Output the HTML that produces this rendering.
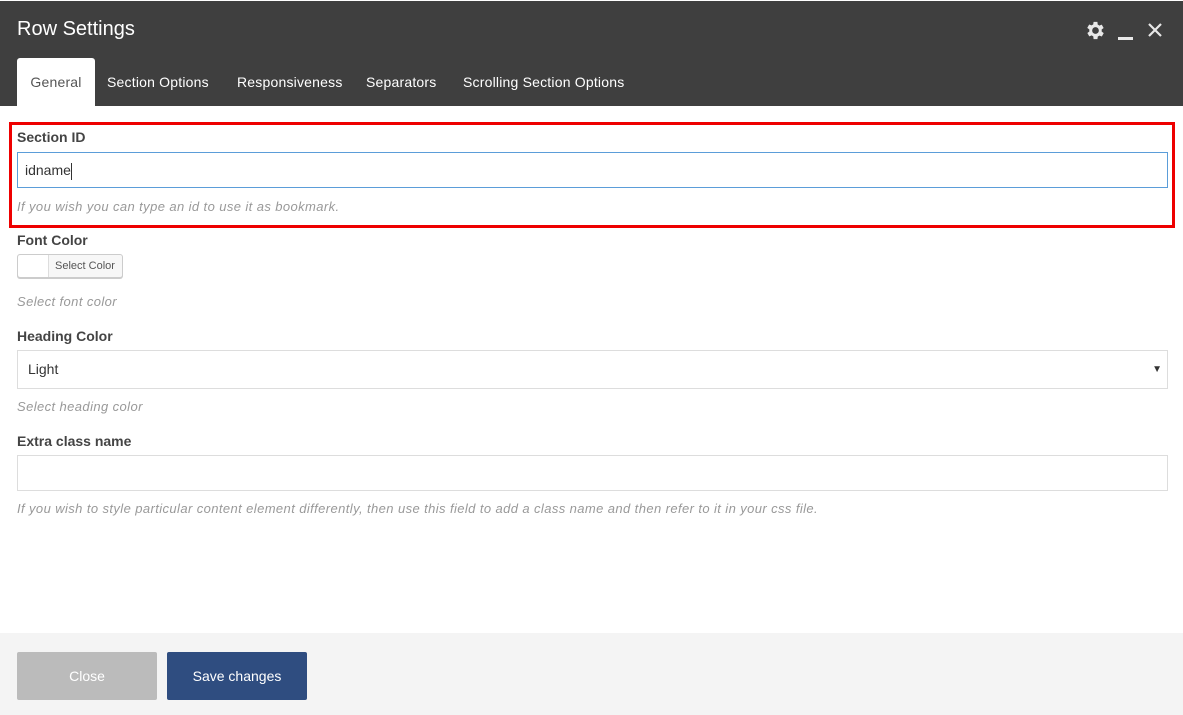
<!DOCTYPE html>
<html><head><style>
*{box-sizing:border-box;margin:0;padding:0}
body{width:1183px;height:715px;background:#fff;font-family:"Liberation Sans",sans-serif;position:relative;overflow:hidden}
.hdr{position:absolute;left:0;top:1px;width:1183px;height:105px;background:#3f3f3f}
.title{position:absolute;left:17px;top:17px;color:#fff;font-size:20px}
.tab{position:absolute;top:57px;height:49px;color:#fff;font-size:14px;line-height:48px;letter-spacing:0.2px}
.tab.act{background:#fff;color:#555;border-radius:3px 3px 0 0;left:17px;width:78px;text-align:center}
.lbl{position:absolute;left:17px;font-size:14px;font-weight:bold;color:#444}
.help{position:absolute;left:17px;font-size:13px;font-style:italic;color:#999;letter-spacing:0.4px}
.inp{position:absolute;left:17px;width:1151px;border:1px solid #ddd;background:#fff;font-size:14px;color:#333;padding-left:10px}
.foot{position:absolute;left:0;top:633px;width:1183px;height:82px;background:#f4f4f4}
.btn{position:absolute;top:652px;height:48px;color:#fff;font-size:14px;text-align:center;line-height:48px;border-radius:2px}
</style></head><body>
<div class="hdr">
<div class="title">Row Settings</div>
<svg style="position:absolute;left:1084px;top:18px" width="23" height="23" viewBox="0 0 24 24"><path fill="#e8e8e8" d="M19.4 13a7.5 7.5 0 0 0 0-2l2.1-1.6-2-3.5-2.5 1a7.6 7.6 0 0 0-1.7-1L15 3h-4l-.4 2.7a7.6 7.6 0 0 0-1.7 1l-2.5-1-2 3.5L6.6 11a7.5 7.5 0 0 0 0 2l-2.1 1.6 2 3.5 2.5-1a7.6 7.6 0 0 0 1.7 1L11 21h4l.4-2.7a7.6 7.6 0 0 0 1.7-1l2.5 1 2-3.5zM13 15.5a3.5 3.5 0 1 1 0-7 3.5 3.5 0 0 1 0 7z" transform="translate(-1 0)"/></svg>
<div style="position:absolute;left:1118px;top:36px;width:15px;height:3px;background:#e8e8e8"></div>
<svg style="position:absolute;left:1147px;top:21px" width="16" height="16" viewBox="0 0 16 16"><path d="M2 2L14 14M14 2L2 14" stroke="#e8e8e8" stroke-width="2.2"/></svg>
<div class="tab act">General</div>
<div class="tab" style="left:107px">Section Options</div>
<div class="tab" style="left:237px">Responsiveness</div>
<div class="tab" style="left:366px">Separators</div>
<div class="tab" style="left:463px">Scrolling Section Options</div>
</div>
<div style="position:absolute;left:9px;top:122px;width:1166px;height:106px;border:3px solid #e00"></div>
<div class="lbl" style="top:129px">Section ID</div>
<div class="inp" style="top:152px;height:36px;line-height:34px;border-color:#5b9dd9;padding-left:7px">idname<span style="display:inline-block;width:1px;height:17px;background:#333;vertical-align:middle"></span></div>
<div class="help" style="top:199px">If you wish you can type an id to use it as bookmark.</div>
<div class="lbl" style="top:232px">Font Color</div>
<div style="position:absolute;left:17px;top:254px;width:106px;height:24px;border:1px solid #ccc;border-radius:3px;background:#f7f7f7;box-shadow:0 1px 0 #ccc">
<div style="position:absolute;left:0;top:0;width:31px;height:22px;background:#fff;border-right:1px solid #ddd;border-radius:3px 0 0 3px"></div>
<div style="position:absolute;left:37px;top:5px;font-size:11px;color:#555">Select Color</div></div>
<div class="help" style="top:294px">Select font color</div>
<div class="lbl" style="top:328px">Heading Color</div>
<div class="inp" style="top:350px;height:39px;line-height:37px">Light<span style="position:absolute;right:5px;font-size:10px;color:#333">▼</span></div>
<div class="help" style="top:399px">Select heading color</div>
<div class="lbl" style="top:433px">Extra class name</div>
<div class="inp" style="top:455px;height:36px"></div>
<div class="help" style="top:501px">If you wish to style particular content element differently, then use this field to add a class name and then refer to it in your css file.</div>
<div class="foot"></div>
<div class="btn" style="left:17px;width:140px;background:#bbb">Close</div>
<div class="btn" style="left:167px;width:140px;background:#2f4d80">Save changes</div>
</body></html>
